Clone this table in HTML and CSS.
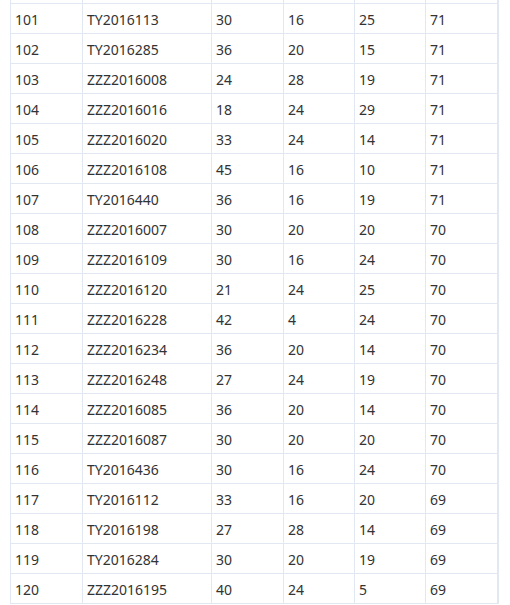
FILE: index.html
```html
<!DOCTYPE html>
<html>
<head>
<meta charset="utf-8">
<link rel="stylesheet" href="styles.css">
</head>
<body>
<div class="page">
  <div class="grid">
    <div class="c first spacer"></div><div class="c spacer"></div><div class="c spacer"></div><div class="c spacer"></div><div class="c spacer"></div><div class="c last spacer"></div>
    <div class="c first">101</div><div class="c">TY2016113</div><div class="c">30</div><div class="c">16</div><div class="c">25</div><div class="c last">71</div>
    <div class="c first">102</div><div class="c">TY2016285</div><div class="c">36</div><div class="c">20</div><div class="c">15</div><div class="c last">71</div>
    <div class="c first">103</div><div class="c">ZZZ2016008</div><div class="c">24</div><div class="c">28</div><div class="c">19</div><div class="c last">71</div>
    <div class="c first">104</div><div class="c">ZZZ2016016</div><div class="c">18</div><div class="c">24</div><div class="c">29</div><div class="c last">71</div>
    <div class="c first">105</div><div class="c">ZZZ2016020</div><div class="c">33</div><div class="c">24</div><div class="c">14</div><div class="c last">71</div>
    <div class="c first">106</div><div class="c">ZZZ2016108</div><div class="c">45</div><div class="c">16</div><div class="c">10</div><div class="c last">71</div>
    <div class="c first">107</div><div class="c">TY2016440</div><div class="c">36</div><div class="c">16</div><div class="c">19</div><div class="c last">71</div>
    <div class="c first">108</div><div class="c">ZZZ2016007</div><div class="c">30</div><div class="c">20</div><div class="c">20</div><div class="c last">70</div>
    <div class="c first">109</div><div class="c">ZZZ2016109</div><div class="c">30</div><div class="c">16</div><div class="c">24</div><div class="c last">70</div>
    <div class="c first">110</div><div class="c">ZZZ2016120</div><div class="c">21</div><div class="c">24</div><div class="c">25</div><div class="c last">70</div>
    <div class="c first">111</div><div class="c">ZZZ2016228</div><div class="c">42</div><div class="c">4</div><div class="c">24</div><div class="c last">70</div>
    <div class="c first">112</div><div class="c">ZZZ2016234</div><div class="c">36</div><div class="c">20</div><div class="c">14</div><div class="c last">70</div>
    <div class="c first">113</div><div class="c">ZZZ2016248</div><div class="c">27</div><div class="c">24</div><div class="c">19</div><div class="c last">70</div>
    <div class="c first">114</div><div class="c">ZZZ2016085</div><div class="c">36</div><div class="c">20</div><div class="c">14</div><div class="c last">70</div>
    <div class="c first">115</div><div class="c">ZZZ2016087</div><div class="c">30</div><div class="c">20</div><div class="c">20</div><div class="c last">70</div>
    <div class="c first">116</div><div class="c">TY2016436</div><div class="c">30</div><div class="c">16</div><div class="c">24</div><div class="c last">70</div>
    <div class="c first">117</div><div class="c">TY2016112</div><div class="c">33</div><div class="c">16</div><div class="c">20</div><div class="c last">69</div>
    <div class="c first">118</div><div class="c">TY2016198</div><div class="c">27</div><div class="c">28</div><div class="c">14</div><div class="c last">69</div>
    <div class="c first">119</div><div class="c">TY2016284</div><div class="c">30</div><div class="c">20</div><div class="c">19</div><div class="c last">69</div>
    <div class="c first">120</div><div class="c">ZZZ2016195</div><div class="c">40</div><div class="c">24</div><div class="c">5</div><div class="c last">69</div>
  </div>
</div>
</body>
</html>
```
FILE: styles.css
```css
html, body {
  margin: 0;
  padding: 0;
  background: #ffffff;
}
.page {
  padding-left: 10px;
  height: 605px;
  overflow: hidden;
}
.grid {
  display: grid;
  grid-template-columns: 73px 129px 72px 71px 71px 73px;
  grid-template-rows: 4px repeat(20, 30px);
  font-family: "Noto Sans", "Open Sans", sans-serif;
  font-size: 14px;
  color: #333333;
}
.c {
  box-sizing: border-box;
  border-right: 1px solid #e1e8f1;
  border-bottom: 1px solid #e1e8f1;
  display: flex;
  align-items: center;
  padding: 2px 4px 0 4px;
  white-space: nowrap;
  overflow: hidden;
}
.c.first {
  border-left: 1px solid #e1e8f1;
}
.c.last {
  border-right: 2px solid #e1e8f1;
}
.c.spacer {
  padding: 0;
}
```
